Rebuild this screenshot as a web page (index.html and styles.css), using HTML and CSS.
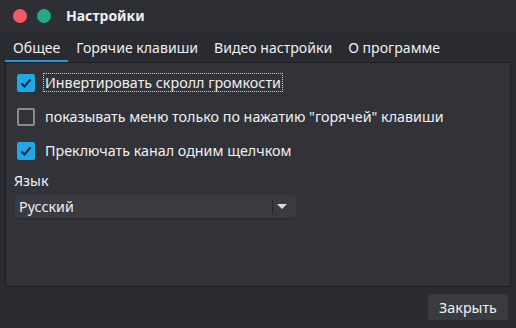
FILE: index.html
```html
<!DOCTYPE html>
<html>
<head>
  <title>Настройки</title>
  <link rel="stylesheet" href="styles.css">
</head>
<body>
  <div class="window">
    <!-- Title bar -->
    <div class="titlebar">
      <span class="dot red"></span>
      <span class="dot green"></span>
      <span class="title">Настройки</span>
    </div>

    <!-- Tabs -->
    <div class="tabs">
      <div class="tab active">Общее</div>
      <div class="tab">Горячие клавиши</div>
      <div class="tab">Видео настройки</div>
      <div class="tab">О программе</div>
    </div>

    <!-- General page -->
    <div class="pane">
      <label class="check">
        <span class="box on">
          <svg width="14" height="14" viewBox="0 0 14 14"><path d="M2.5 7.5 L5.5 10.5 L11.5 3.5" fill="none" stroke="#1d2a33" stroke-width="2"/></svg>
        </span>
        <span class="text focus">Инвертировать скролл громкости</span>
      </label>
      <label class="check">
        <span class="box"></span>
        <span class="text">показывать меню только по нажатию "горячей" клавиши</span>
      </label>
      <label class="check">
        <span class="box on">
          <svg width="14" height="14" viewBox="0 0 14 14"><path d="M2.5 7.5 L5.5 10.5 L11.5 3.5" fill="none" stroke="#1d2a33" stroke-width="2"/></svg>
        </span>
        <span class="text">Преключать канал одним щелчком</span>
      </label>

      <div class="lang-label">Язык</div>
      <div class="combo">
        <span>Русский</span>
        <span class="sep"></span>
        <span class="arrow"></span>
      </div>
    </div>

    <div class="footer">
      <button class="btn">Закрыть</button>
    </div>
  </div>
</body>
</html>
```

FILE: styles.css
```css
body {
  margin: 0;
  background: #2a2b30;
  font-family: "Noto Sans", sans-serif;
  font-size: 14.3px;
  color: #eff0f1;
}

.window {
  width: 516px;
  height: 328px;
  display: flex;
  flex-direction: column;
}

.titlebar {
  height: 31px;
  background: #2e2f35;
  display: flex;
  align-items: center;
  padding-left: 13px;
  box-sizing: border-box;
}

.dot {
  width: 14px;
  height: 14px;
  border-radius: 50%;
  margin-right: 10px;
}

.red {
  background: #f25a63;
}

.green {
  background: #23a886;
}

.title {
  margin-left: 5px;
  font-weight: bold;
  font-size: 14px;
}

.tabs {
  display: flex;
  padding: 5px 5px 0 5px;
  height: 26px;
  font-size: 14.1px;
}

.tab {
  padding: 0 8px;
  line-height: 24px;
  border-bottom: 2px solid transparent;
}

.tab.active {
  border-bottom-color: #1e9be0;
}

.pane {
  margin: 0 5px;
  height: 225px;
  box-sizing: border-box;
  background: #323338;
  border: 1px solid #1e1f23;
  padding: 10px 11px;
}

.check {
  display: flex;
  align-items: center;
  height: 19px;
  margin-bottom: 15px;
}

.box {
  width: 14px;
  height: 14px;
  border: 2px solid #8a8b8f;
  border-radius: 2px;
  margin-right: 8px;
  display: flex;
  align-items: center;
  justify-content: center;
}

.box.on {
  background: #1ea8e8;
  border-color: #1ea8e8;
}

.text {
  padding: 0 1px;
  border: 1px solid transparent;
  line-height: 17px;
}

.text.focus {
  border: 1px dotted #d0d0d0;
}

.lang-label {
  margin-top: -3px;
  margin-left: -3px;
  line-height: 18px;
}

.combo {
  margin-top: 5px;
  margin-left: -2px;
  width: 281px;
  height: 23px;
  background: #393b41;
  border-radius: 3px;
  box-shadow: 0 1px 1px #26272b;
  display: flex;
  align-items: center;
  padding-left: 4px;
  box-sizing: border-box;
}

.combo span:first-child {
  flex: 1;
}

.sep {
  width: 1px;
  height: 15px;
  background: #26272b;
  margin-right: 4px;
}

.arrow {
  width: 0;
  height: 0;
  border-left: 5px solid transparent;
  border-right: 5px solid transparent;
  border-top: 5px solid #dcdcdc;
  margin-right: 9px;
}

.footer {
  display: flex;
  justify-content: flex-end;
  padding: 7px 8px 0 0;
}

.btn {
  width: 80px;
  height: 26px;
  background: #393b41;
  border: none;
  border-radius: 3px;
  color: #eff0f1;
  font-family: "Noto Sans", sans-serif;
  font-size: 14.3px;
}
```
